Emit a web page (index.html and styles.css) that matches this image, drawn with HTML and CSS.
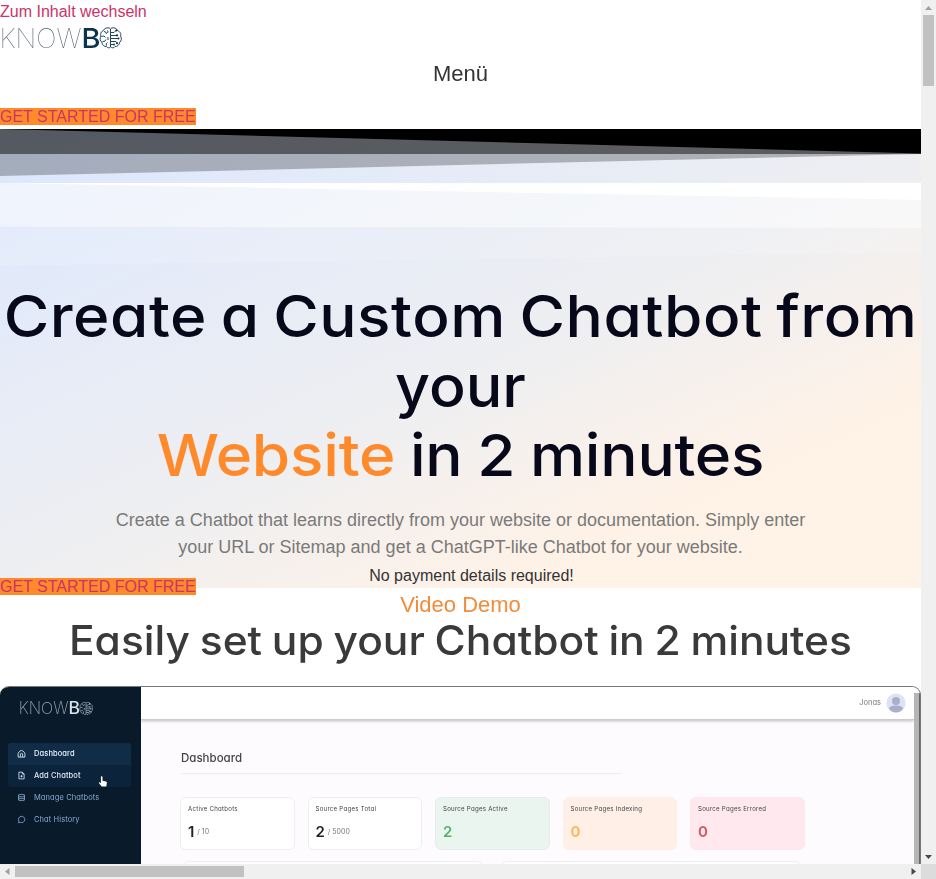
FILE: index.html
```html
<!DOCTYPE html>
<html lang="de">
<head>
<meta charset="utf-8">
<title>Knowbo</title>
<link rel="stylesheet" href="styles.css">
</head>
<body>
<svg width="0" height="0" class="defs">
  <symbol id="brain" viewBox="0 0 122 24">
    <g class="brain">
      <path d="M110 2.200C107 1 104 2.500 103.500 4.500C101 5.500 100 8 101 10C99.500 12 100 15 101.800 16.200C102 19 104.500 20.800 106.500 20.500C107.500 22.400 110 22 110.500 21V2.500"/>
      <path d="M111 2.200C114 1 117 2.500 117.500 4.500C120 5.500 121.500 8 120.500 10C122 12 121.500 15 119.700 16.200C119.500 19 117 20.800 115 20.500C114 22.400 111.500 22 111 21"/>
      <path d="M104 5.500q2.500 0 2.500 2.500M101.500 10.500q3-1.500 4 1M102.500 15.500q3 .5 3.500-2M106.500 19.500q-1-2 1-3M107.500 4.500q1 1.500 0 2.500M108 11v3"/>
      <path d="M111 6.500h3l2-2M111 9.500h6M111 12.500h8M111 15.500h5l1.500 2M111 18.500h3"/>
    </g>
    <g class="dots"><circle cx="116.300" cy="4.500" r="1"/><circle cx="117" cy="9.300" r="1.100"/><circle cx="118.500" cy="12.500" r="1"/><circle cx="117" cy="17.300" r="1"/><circle cx="114" cy="18.500" r=".9"/></g>
  </symbol>
</svg>
<div class="window">
  <main class="page">
    <a class="skip">Zum Inhalt wechseln</a>
    <svg class="logo" width="122" height="24" viewBox="0 0 122 24">
      <text class="logo-thin" x="-.5" y="21.500" textLength="82" lengthAdjust="spacingAndGlyphs">KNOW</text>
      <text class="logo-bold" x="81.500" y="21.500" textLength="19" lengthAdjust="spacingAndGlyphs">B</text>
      <use href="#brain" width="122" height="24"/>
    </svg>
    <div class="menu">Menü</div>
    <div class="cta-row"><a class="cta">GET STARTED FOR FREE</a></div>
    <section class="hero">
      <svg class="dividers" viewBox="0 0 921 140" preserveAspectRatio="none">
        <path d="M0 0H921V25L0 47Z" fill="#000" fill-opacity=".255"/>
        <path d="M0 0H921V25H0Z" fill="#000" fill-opacity=".48"/>
        <path d="M0 0H921V24.500Z" fill="#000"/>
        <path d="M0 54H921V99L0 97.500Z" fill="#fff" fill-opacity=".48"/>
        <path d="M0 54H921V123L0 137Z" fill="#fff" fill-opacity=".15"/>
        <path d="M0 54H921V71Z" fill="#fff" fill-opacity=".9"/>
      </svg>
      <h1>
        <span class="h1-a">Create a Custom Chatbot from</span>
        <span class="h1-b">your</span>
        <span class="h1-c"><em>Website</em> in 2 minutes</span>
      </h1>
      <p class="lead">Create a Chatbot that learns directly from your website or documentation. Simply enter<br>your URL or Sitemap and get a ChatGPT-like Chatbot for your website.</p>
      <p class="note">No payment details required!</p>
    </section>
    <div class="cta-row cta-low"><a class="cta">GET STARTED FOR FREE</a></div>
    <a class="video">Video Demo</a>
    <h2>Easily set up your Chatbot in 2 minutes</h2>
    <section class="app">
      <aside class="side">
        <svg class="side-logo" width="74" height="15" viewBox="0 0 122 24">
          <text class="logo-thin" x="-.5" y="21.500" textLength="82" lengthAdjust="spacingAndGlyphs">KNOW</text>
          <text class="logo-bold" x="81.500" y="21.500" textLength="19" lengthAdjust="spacingAndGlyphs">B</text>
          <use href="#brain" width="122" height="24"/>
        </svg>
        <nav>
          <a class="on"><svg viewBox="0 0 12 12"><path d="M1.500 5.500Q6-1.500 10.500 5.500V10.800H1.500ZM4.500 10.500V6.500Q6 5 7.500 6.500V10.500"/></svg><span>Dashboard</span></a>
          <a class="hover"><svg viewBox="0 0 12 12"><path d="M2.500 1.500H7L9.500 4V10.500H2.500ZM7 1.500V4H9.500M6 5.500V8.500M4.500 7H7.500"/></svg><span>Add Chatbot</span></a>
          <a><svg viewBox="0 0 12 12"><path d="M2 2.500Q6 1 10 2.500V9.500Q6 11 2 9.500ZM2 5H10M2 7.500H10"/></svg><span>Manage Chatbots</span></a>
          <a><svg viewBox="0 0 12 12"><path d="M2 10.300 2.500 8A4.200 4.200 0 1 1 4.500 9.800Z"/></svg><span>Chat History</span></a>
          <svg class="pointer" viewBox="0 0 12 16"><path d="M3.500 1.500q1.200-1 1.900.2V6.500l4.200.8q1.200.3 1 1.600L10 13.500H4.500L1 9.300q0-1.300 1.300-.7l1.200.9Z"/></svg>
        </nav>
      </aside>
      <div class="main">
        <header><span>Jonas</span>
          <svg width="20" height="20" viewBox="0 0 20 20"><circle cx="10" cy="10" r="9.600" fill="#e0e2f3"/><circle cx="10" cy="8" r="4" fill="#a7afcb"/><path d="M3 16q0-3.500 7-3.500T17 16Q14 19.500 10 19.500T3 16Z" fill="#a7afcb"/></svg>
        </header>
        <h3>Dashboard</h3>
        <div class="cards">
          <div class="card"><b>Active Chatbots</b><p>1<small>/ 10</small></p></div>
          <div class="card"><b>Source Pages Total</b><p>2<small>/ 5000</small></p></div>
          <div class="card green"><b>Source Pages Active</b><p>2</p></div>
          <div class="card orange"><b>Source Pages Indexing</b><p>0</p></div>
          <div class="card red"><b>Source Pages Errored</b><p>0</p></div>
        </div>
        <div class="panels"><i></i><i></i></div>
      </div>
      <div class="app-scroll"></div>
    </section>
  </main>
  <div class="vbar"><svg viewBox="0 0 15 15"><path d="M4 10H11L7.500 6Z" fill="#a0a0a0"/></svg><div class="vthumb"></div><svg class="end" viewBox="0 0 15 15"><path d="M4 6H11L7.500 10Z" fill="#484848"/></svg></div>
  <div class="hbar"><svg viewBox="0 0 15 15"><path d="M9.500 4V11L5 7.500Z" fill="#a0a0a0"/></svg><div class="hthumb"></div><svg class="end" viewBox="0 0 15 15"><path d="M5.500 4V11L10 7.500Z" fill="#484848"/></svg></div>
  <div class="corner"></div>
</div>
</body>
</html>
```

FILE: styles.css
```css
* { box-sizing: border-box; }
html, body { height: 100%; overflow: hidden; }
body { margin: 0; background: #fff; color: #333; font: 16px/24px "Liberation Sans", Arial, sans-serif; }
h1, h2, h3, p { margin: 0; }
.defs { position: absolute; }
.window { display: grid; grid-template: 864px 15px / 921px 15px; }
.page { display: flex; flex-direction: column; overflow: hidden; min-width: 0; }
.page > * { flex-shrink: 0; }

.skip { height: 26px; color: #cc3366; line-height: 24px; }
.logo { display: block; height: 24px; overflow: visible; color: #0b3350; --thin: #53656f; }
.logo-thin { font: 100 27.5px Inter, sans-serif; fill: var(--thin); }
.logo-bold { font: 500 27.5px Inter, sans-serif; fill: currentColor; }
.logo text, .side-logo text { will-change: transform; }
.brain { fill: none; stroke: currentColor; stroke-width: .9; }
.dots { fill: currentColor; }
.menu { height: 55px; padding-top: 11px; text-align: center; font-size: 22px; line-height: 26px; }
.cta-row { height: 24px; }
.cta { background: #ff8a2b; color: #cc3366; }

.hero { position: relative; height: 459px; padding-top: 153px; text-align: center; background: linear-gradient(156deg, #dbe7fe 0%, #efeff1 54%, #fff2e6 79%); }
.dividers { position: absolute; left: 0; top: 0; width: 921px; height: 140px; }
h1, h2, .app { font-family: Inter, sans-serif; font-feature-settings: "cv11"; }
h1 { font-size: 58px; font-weight: 500; line-height: 69.6px; color: #070819; }
h1 span { display: block; white-space: nowrap; }
h1 em { font-style: normal; color: #ff8a2b; }
.h1-a { letter-spacing: .5px; word-spacing: -3.2px; transform: scaleX(1.07); }
.h1-b { transform: scaleX(1.05); }
.h1-c { letter-spacing: -.2px; word-spacing: -1.5px; transform: scaleX(1.07); }
.lead { margin-top: 16px; font-size: 18px; line-height: 27px; color: #7a7a7a; }
.note { padding-left: 22px; margin-top: 3px; color: #333; }
.cta-low { position: relative; height: 4px; margin-top: -13px; }
.video { margin-top: 12px; height: 28px; text-align: center; font-size: 22px; line-height: 28px; color: #f28c38; }
h2 { height: 67px; text-align: center; font-size: 40.5px; font-weight: 500; line-height: 43px; color: #3a3a3a; white-space: nowrap; word-spacing: -1.5px; transform: scaleX(1.05); }

.app { display: grid; grid-template-columns: 141px 773px 6px; height: 400px; border: 1px solid #777; border-left: 0; border-radius: 9px; overflow: hidden; background: #fdfbfe; }
.side { background: #091b2b; padding: 14px 10px 0 8px; }
.side-logo { display: block; margin-left: 11px; overflow: visible; color: #d9e2e9; --thin: #91a1ad; }
.side .logo-thin { font-weight: 200; }
nav { position: relative; margin-top: 27px; }
nav a { display: flex; align-items: center; gap: 7px; height: 22px; padding-left: 8px; font-size: 7.5px; font-weight: 400; color: #86a9d0; letter-spacing: .1px; }
nav a svg { width: 11px; height: 9px; margin-bottom: 2px; fill: none; stroke: currentColor; stroke-width: 1.1; }
nav .on { background: #102c46; color: #eaf3fb; border-radius: 3px 3px 0 0; font-weight: 500; }
nav .hover { background: #0c243b; color: #d9e8f7; border-radius: 0 0 3px 3px; font-weight: 500; }
.pointer { position: absolute; left: 90px; top: 32px; width: 10px; height: 14px; fill: #fff; }
.main { overflow: hidden; }
header { display: flex; align-items: center; justify-content: flex-end; gap: 5px; height: 33px; padding-right: 8px; background: #fff; border-bottom: 1px solid #ccc; box-shadow: 0 1px 3px #bbb; font-size: 7.5px; color: #777; }
.main h3 { width: 440px; height: 54px; margin-left: 40px; padding-top: 27px; font-size: 11.5px; font-weight: 500; line-height: 22px; color: #444; border-bottom: 1px solid #ececf0; }
.cards { display: flex; gap: 13px; margin: 23px 0 0 39px; }
.card { width: 114.5px; height: 53px; padding: 5px 7px; border: 1px solid #eeedf1; border-radius: 6px; background: #fff; color: #222; }
.card b { display: block; font-size: 6.1px; line-height: 12px; font-weight: 400; color: #444; letter-spacing: .25px; white-space: nowrap; }
.card p { display: flex; align-items: center; gap: 3px; margin-top: 7px; font-size: 15px; line-height: 20px; font-weight: 600; }
.card small { font-size: 7px; line-height: 10px; font-weight: 400; color: #777; }
.green { background: #ebf5ef; border-color: #e2eee7; }
.green p { color: #56b06c; }
.orange { background: #ffefe6; border-color: #ffefe6; }
.orange p { color: #ffb54c; }
.red { background: #ffe8ee; border-color: #ffe5ec; }
.red p { color: #d85362; }
.panels { display: flex; gap: 18px; margin: 11px 0 0 42px; }
.panels i { height: 40px; width: 300px; border: 1px solid #eeedf1; border-radius: 6px; background: #fff; }
.app-scroll { margin-top: 6px; background: #b5b5b5; border-right: 1px solid #666; }

.vbar { display: flex; flex-direction: column; background: #f0f0f0; padding: 0 1px; }
.vbar svg, .hbar svg { display: block; width: 15px; height: 15px; }
.vbar svg { margin-left: -1px; }
.vthumb { height: 71px; margin: 0 1px; background: #c1c1c1; }
.vbar .end { margin-top: auto; }
.hbar { display: flex; background: #f0f0f0; }
.hthumb { width: 229px; height: 11px; margin-top: 2px; background: #c1c1c1; }
.hbar .end { margin-left: auto; }
.corner { background: #dcdcdc; }
```
